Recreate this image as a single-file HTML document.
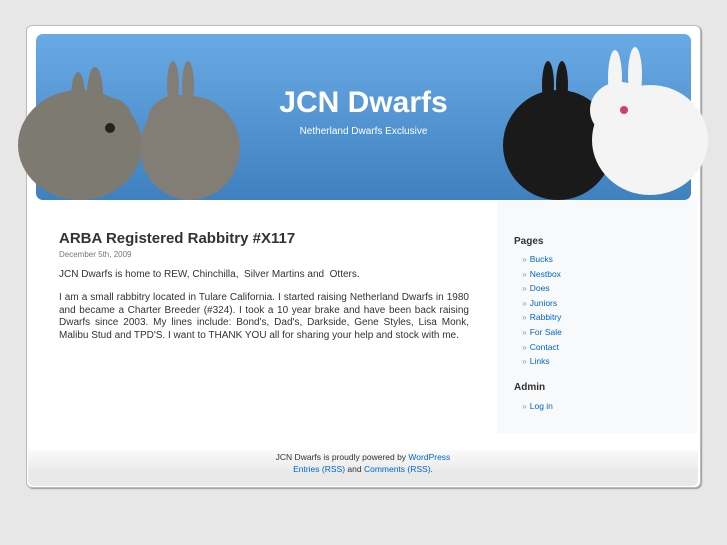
<!DOCTYPE html>
<html><head><style>
body{margin:0;background:#e7e7e7;font-family:"Liberation Sans",sans-serif;width:727px;height:545px;overflow:hidden;position:relative}
#page{position:absolute;left:26px;top:25px;width:673px;height:461px;background:#fff;border:1px solid #bbb;border-radius:6px;box-shadow:1px 1px 1px #999}
#hdr{position:absolute;left:36px;top:34px;width:655px;height:166px;border-radius:7px;background:linear-gradient(#69aae6,#3f80bf)}
#hdr h1{position:absolute;left:0;width:655px;top:52px;margin:0;text-align:center;color:#fff;font-size:30px;font-weight:bold}
#hdr .d{position:absolute;left:0;width:655px;top:92px;text-align:center;color:#fff;font-size:10px}
#side{position:absolute;left:497px;top:200px;width:200px;height:233px;background:#f8f9fb}
h2{position:absolute;left:59px;top:230px;margin:0;font-size:15px;color:#333;font-weight:bold}
.date{position:absolute;left:59px;top:250px;font-size:8px;color:#777}
.txt{position:absolute;left:59px;width:410px;font-size:10px;color:#333;line-height:12.7px;text-align:justify}
h3{position:absolute;left:514px;margin:0;font-size:10px;color:#333;font-weight:bold}
ul{position:absolute;left:522px;margin:0;padding:0;list-style:none;font-size:8.5px;line-height:14.6px}
li{color:#999}li span{color:#06c;margin-left:3px}
#ft{position:absolute;left:28px;top:452px;width:670px;height:20px;text-align:center;font-size:8.5px;color:#333;line-height:11.5px}
#ftb{position:absolute;left:28px;top:450px;width:670px;height:20px;background:linear-gradient(#fafafa,#ececec)}
#ft span{color:#06c}
#fb{position:absolute;left:28px;top:470px;width:670px;height:16px;background:#e9e9e9;border-radius:0 0 6px 6px}
</style></head><body>
<div id="page"></div>
<div id="hdr"><h1>JCN Dwarfs</h1><div class="d">Netherland Dwarfs Exclusive</div></div>
<svg style="position:absolute;left:0;top:0" width="727" height="200">
<g fill="#7d7a72"><ellipse cx="80" cy="145" rx="62" ry="55"/><ellipse cx="95" cy="95" rx="8" ry="28"/><ellipse cx="78" cy="98" rx="7" ry="26"/><ellipse cx="110" cy="120" rx="22" ry="22"/></g>
<g fill="#827e76"><ellipse cx="190" cy="148" rx="50" ry="52"/><ellipse cx="173" cy="85" rx="6" ry="24"/><ellipse cx="188" cy="85" rx="6" ry="24"/><ellipse cx="178" cy="120" rx="30" ry="25"/></g>
<circle cx="110" cy="128" r="5" fill="#222"/>
<g fill="#1a1a1a"><ellipse cx="558" cy="145" rx="55" ry="55"/><ellipse cx="548" cy="85" rx="6" ry="24"/><ellipse cx="562" cy="85" rx="6" ry="24"/></g>
<g fill="#f4f4f4"><ellipse cx="650" cy="140" rx="58" ry="55"/><ellipse cx="615" cy="78" rx="7" ry="28"/><ellipse cx="635" cy="75" rx="7" ry="28"/><ellipse cx="620" cy="110" rx="30" ry="28"/></g>
<circle cx="624" cy="110" r="4" fill="#d04060"/>
</svg>
<div id="side"></div>
<h2>ARBA Registered Rabbitry #X117</h2>
<div class="date">December 5th, 2009</div>
<div class="txt" style="top:269px">JCN Dwarfs is home to REW, Chinchilla, &nbsp;Silver Martins and &nbsp;Otters.</div>
<div class="txt" style="top:292px">I am a small rabbitry located in Tulare California. I started raising Netherland Dwarfs in 1980 and became a Charter Breeder (#324). I took a 10 year brake and have been back raising Dwarfs since 2003. My lines include: Bond's, Dad's, Darkside, Gene Styles, Lisa Monk, Malibu Stud and TPD'S. I want to THANK YOU all for sharing your help and stock with me.</div>
<h3 style="top:236px">Pages</h3>
<ul style="top:252px"><li>»<span>Bucks</span></li><li>»<span>Nestbox</span></li><li>»<span>Does</span></li><li>»<span>Juniors</span></li><li>»<span>Rabbitry</span></li><li>»<span>For Sale</span></li><li>»<span>Contact</span></li><li>»<span>Links</span></li></ul>
<h3 style="top:382px">Admin</h3>
<ul style="top:399px"><li>»<span>Log in</span></li></ul>
<div id="ftb"></div>
<div id="fb"></div>
<div id="ft">JCN Dwarfs is proudly powered by <span>WordPress</span><br><span>Entries (RSS)</span> and <span>Comments (RSS)</span>.</div>
</body></html>
